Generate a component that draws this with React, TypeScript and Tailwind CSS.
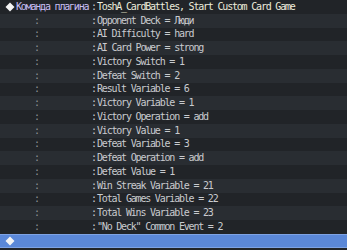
const params = [
  'Opponent Deck = Люди',
  'AI Difficulty = hard',
  'AI Card Power = strong',
  'Victory Switch = 1',
  'Defeat Switch = 2',
  'Result Variable = 6',
  'Victory Variable = 1',
  'Victory Operation = add',
  'Victory Value = 1',
  'Defeat Variable = 3',
  'Defeat Operation = add',
  'Defeat Value = 1',
  'Win Streak Variable = 21',
  'Total Games Variable = 22',
  'Total Wins Variable = 23',
  '"No Deck" Common Event = 2',
];

function Diamond() {
  return (
    <svg width="10" height="10" viewBox="0 0 10 10" className="ml-[5px] mr-[1px] shrink-0">
      <path d="M5 0.5 L9.5 5 L5 9.5 L0.5 5 Z" fill="#f4f4f4" />
    </svg>
  );
}

export default function App() {
  return (
    <div
      className="flex h-[250px] w-[347px] flex-col overflow-hidden bg-[#212428] text-[10px] leading-none tracking-[-1.2px] text-[#c9cbcf]"
      style={{ fontFamily: '"DejaVu Sans Mono", "Liberation Mono", monospace' }}
    >
      {/* header command row */}
      <div className="flex h-[13.75px] shrink-0 items-center bg-[#212428]">
        <Diamond />
        <span className="w-[75px] text-[#c9bff5]">Команда плагина</span>
        <span className="w-[6px] text-[#c9cbcf]">:</span>
        <span className="text-[#ecebdc]">ToshA_CardBattles, Start Custom Card Game</span>
      </div>

      {params.map((p, i) => (
        <div
          key={p}
          className={`flex h-[13.75px] shrink-0 items-center ${i % 2 === 0 ? 'bg-[#292d32]' : 'bg-[#212428]'}`}
        >
          <span className="ml-[34px] w-[57px] text-[#8e9298]">:</span>
          <span className="w-[6px]">:</span>
          <span>{p}</span>
        </div>
      ))}

      {/* selected empty row */}
      <div className="flex h-[13.75px] shrink-0 items-center border-y border-[#7ea3e4] bg-[#5b88d8]">
        <Diamond />
      </div>
    </div>
  );
}
